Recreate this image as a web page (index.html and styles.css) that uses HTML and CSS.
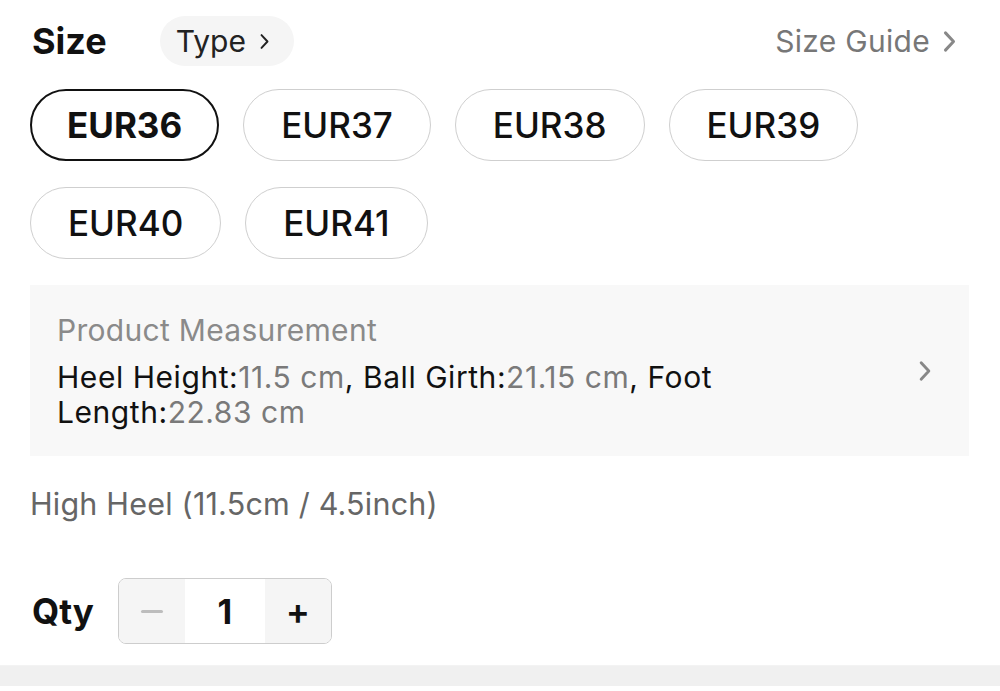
FILE: index.html
```html
<!DOCTYPE html>
<html lang="en">
<head>
<meta charset="utf-8">
<title>Size selector</title>
<link rel="stylesheet" href="styles.css">
</head>
<body>
<div class="page">
  <div class="head">
    <div class="head-left">
      <span class="title">Size</span>
      <span class="type-pill">Type
        <svg class="chev-sm" viewBox="0 0 12 20" width="11" height="17"><path d="M2.5 2.5 L9.5 10 L2.5 17.5" fill="none" stroke="#222" stroke-width="2.3" stroke-linecap="round" stroke-linejoin="round"/></svg>
      </span>
    </div>
    <span class="guide">Size Guide
      <svg class="chev-guide" viewBox="0 0 12 20" width="15" height="23"><path d="M2.5 2.5 L9.5 10 L2.5 17.5" fill="none" stroke="#888" stroke-width="2.6" stroke-linecap="round" stroke-linejoin="round"/></svg>
    </span>
  </div>

  <div class="sizes">
    <span class="size selected">EUR36</span>
    <span class="size">EUR37</span>
    <span class="size">EUR38</span>
    <span class="size">EUR39</span>
    <span class="size">EUR40</span>
    <span class="size">EUR41</span>
  </div>

  <div class="measure">
    <div class="measure-text">
      <div class="measure-label">Product Measurement</div>
      <div class="measure-values">Heel Height:<span class="val">11.5 cm</span>, Ball Girth:<span class="val">21.15 cm</span>, Foot Length:<span class="val">22.83 cm</span></div>
    </div>
    <svg class="chev-measure" viewBox="0 0 12 20" width="14" height="22"><path d="M2.5 2.5 L9.5 10 L2.5 17.5" fill="none" stroke="#888" stroke-width="2.6" stroke-linecap="round" stroke-linejoin="round"/></svg>
  </div>

  <div class="heel">High Heel (11.5cm / 4.5inch)</div>

  <div class="qty-row">
    <span class="qty-label">Qty</span>
    <div class="stepper">
      <span class="step minus"><span class="minus-bar"></span></span>
      <span class="step-val">1</span>
      <span class="step plus">+</span>
    </div>
  </div>
</div>
<div class="band"></div>
</body>
</html>
```
FILE: styles.css
```css
* { box-sizing: border-box; }
html, body { margin: 0; padding: 0; background: #fff; }
body {
  font-family: Inter, "Noto Sans", "Liberation Sans", sans-serif;
  color: #111;
  width: 1000px;
  height: 691px;
  overflow: hidden;
}
.page { padding: 0 31px 0 30px; }

.head {
  height: 82px;
  display: flex;
  align-items: center;
  justify-content: space-between;
}
.head-left { display: flex; align-items: center; gap: 53px; }
.title { font-size: 36px; font-weight: 700; color: #111; margin-left: 2px; }
.type-pill {
  display: inline-flex;
  align-items: center;
  gap: 13px;
  height: 50px;
  padding: 0 24px 0 16px;
  border-radius: 25px;
  background: #f5f5f5;
  font-size: 30px;
  color: #222;
}
.guide {
  display: inline-flex;
  align-items: center;
  gap: 12px;
  font-size: 30px;
  letter-spacing: 0.3px;
  color: #777;
  margin-right: 12px;
}

.sizes {
  display: flex;
  flex-wrap: wrap;
  gap: 26px 24px;
  margin-top: 7px;
  width: 860px;
}
.size {
  height: 72px;
  padding: 0 37px;
  border: 1.5px solid #cfcfcf;
  border-radius: 36px;
  display: inline-flex;
  align-items: center;
  justify-content: center;
  font-size: 35px;
  font-weight: 500;
  color: #111;
}
.size.selected {
  border: 2.5px solid #111;
  font-weight: 700;
  padding: 0 35px;
}

.measure {
  margin-top: 26px;
  background: #f8f8f8;
  padding: 0 37px 0 27px;
  display: flex;
  align-items: center;
  justify-content: space-between;
  height: 171px;
}
.measure-text { width: 810px; }
.measure-label { font-size: 30px; line-height: 36px; color: #8a8a8a; margin-bottom: 12px; letter-spacing: 0.3px; }
.measure-values { font-size: 30px; line-height: 35px; color: #111; letter-spacing: 0.55px; }
.val { color: #7a7a7a; }
.chev-measure { flex: none; }

.heel {
  margin-top: 28px;
  font-size: 30.5px;
  line-height: 40px;
  color: #666;
  letter-spacing: 0.2px;
}

.qty-row {
  margin-top: 54px;
  display: flex;
  align-items: center;
  gap: 24px;
}
.qty-label { font-size: 35px; font-weight: 700; color: #111; margin-left: 2px; }
.stepper {
  display: flex;
  height: 66px;
  border: 1.5px solid #cdcdcd;
  border-radius: 8px;
  overflow: hidden;
}
.step {
  width: 66px;
  background: #f5f5f5;
  display: flex;
  align-items: center;
  justify-content: center;
}
.minus-bar { width: 22px; height: 3px; background: #bdbdbd; border-radius: 2px; }
.plus { font-size: 36px; font-weight: 600; color: #111; }
.step-val {
  width: 80px;
  display: flex;
  align-items: center;
  justify-content: center;
  background: #fff;
  font-size: 34px;
  font-weight: 700;
}

.band {
  margin-top: 21px;
  height: 21px;
  background: #f0f0f0;
  border-top: 1px solid #f3f3f3;
}
```
